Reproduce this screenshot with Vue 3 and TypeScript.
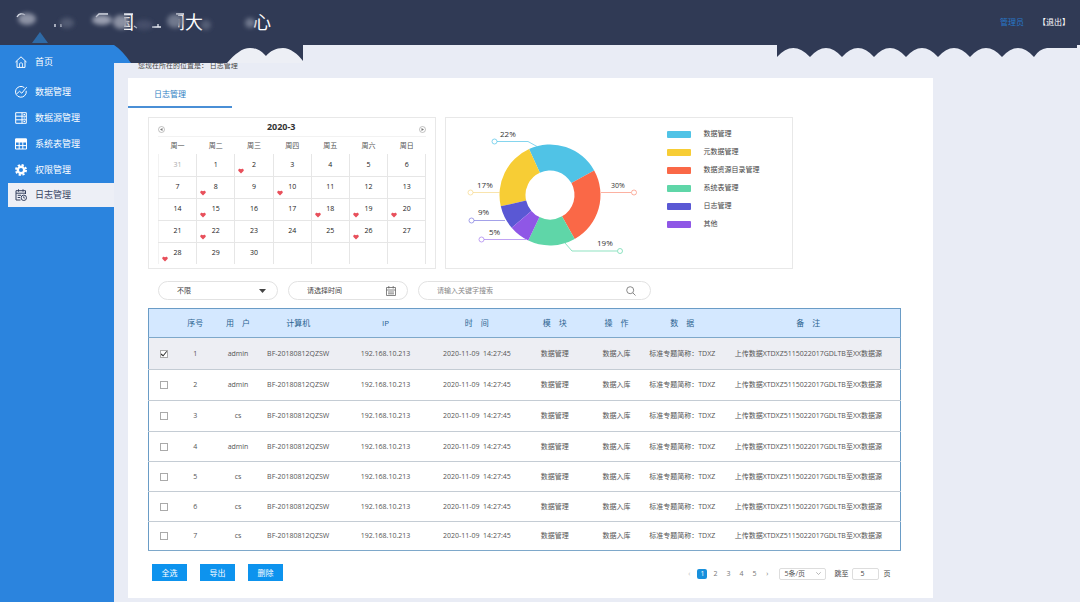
<script setup lang="ts">
import { computed, ref } from 'vue'

interface Day { n: number | null; muted?: boolean; mark?: boolean }
interface Slice { label: string; color: string; from: number; to: number }
interface Row { id: number; user: string; checked: boolean }

const nav = [
  { key: 'home', label: '首页' },
  { key: 'data', label: '数据管理' },
  { key: 'source', label: '数据源管理' },
  { key: 'table', label: '系统表管理' },
  { key: 'auth', label: '权限管理' },
  { key: 'log', label: '日志管理' },
]
const active = ref('log')

const weekdays = ['周一', '周二', '周三', '周四', '周五', '周六', '周日']
const marked = [2, 8, 10, 15, 18, 19, 20, 22, 26, 28]
const weeks = computed<Day[][]>(() =>
  Array.from({ length: 5 }, (_, w) =>
    Array.from({ length: 7 }, (_, d) => {
      const n = w * 7 + d
      if (n === 0) return { n: 31, muted: true }
      if (n > 30) return { n: null }
      return { n, mark: marked.includes(n) }
    }),
  ),
)

const slices: Slice[] = [
  { label: '数据管理', color: '#50c3e6', from: -24.5, to: 61 },
  { label: '元数据管理', color: '#f7cd35', from: 257, to: 335.5 },
  { label: '数据资源目录管理', color: '#fa6847', from: 61, to: 150.7 },
  { label: '系统表管理', color: '#5fd6a8', from: 150.7, to: 205.5 },
  { label: '日志管理', color: '#5a58d4', from: 229.4, to: 257 },
  { label: '其他', color: '#8f57e6', from: 205.5, to: 229.4 },
]
const point = (deg: number, r: number) => {
  const a = (deg * Math.PI) / 180
  return `${(104 + r * Math.sin(a)).toFixed(2)} ${(77 - r * Math.cos(a)).toFixed(2)}`
}
const arc = (s: Slice) =>
  `M${point(s.from, 50.5)}A50.5 50.5 0 0 1 ${point(s.to, 50.5)}L${point(s.to, 24.5)}A24.5 24.5 0 0 0 ${point(s.from, 24.5)}Z`

const heads = ['序号', '用　户', '计算机', 'IP', '时　间', '模　块', '操　作', '数　据', '备　注']
const rows = ref<Row[]>(
  ['admin', 'admin', 'cs', 'admin', 'cs', 'cs', 'cs'].map((user, i) => ({ id: i + 1, user, checked: i === 0 })),
)
const selectAll = () => rows.value.forEach((r) => (r.checked = true))
const page = ref(1)
const jump = ref('5')
</script>

<template>
  <div class="app">
    <header class="top">
      <h1 class="title"><span class="c1">国</span><span class="c2">间大</span><span>心</span></h1>
      <svg class="smudge" width="300" height="45" viewBox="0 0 300 45" aria-hidden="true">
        <defs><filter id="soft" x="-50%" y="-50%" width="200%" height="200%"><feGaussianBlur stdDeviation="2" /></filter></defs>
        <path d="M40 32L48 43H32Z" fill="#2e6aa6" />
        <g fill="#303a55">
          <rect x="113" y="11" width="11" height="23" /><rect x="166" y="11" width="12" height="23" />
        </g>
        <g stroke="#e8ecf4" stroke-width="1.3" fill="none">
          <path d="M17 17Q20 12 25 15M55 24V27M61 24V27M96 17L99 14H108M124 14H133M176 14H184M134 26L137 28M152 27H161M158 24V27" />
        </g>
        <g filter="url(#soft)">
          <ellipse cx="27" cy="19" rx="9" ry="6" fill="#8d93a5" />
          <ellipse cx="67" cy="23" rx="7" ry="5" fill="#515a72" />
          <ellipse cx="102" cy="20" rx="10" ry="5" fill="#9a9fb0" />
          <ellipse cx="121" cy="22" rx="8" ry="7" fill="#8a90a2" />
          <ellipse cx="144" cy="25" rx="9" ry="5" fill="#444e69" />
          <ellipse cx="175" cy="21" rx="8" ry="7" fill="#70788d" />
          <ellipse cx="206" cy="25" rx="5" ry="5" fill="#555e76" />
          <ellipse cx="250" cy="23" rx="5" ry="5" fill="#70788d" />
        </g>
      </svg>
      <div class="account"><a href="#" class="who">管理员</a><a href="#">【退出】</a></div>
      <svg class="edge-left" width="193" height="18" viewBox="0 0 193 18" aria-hidden="true">
        <path d="M0 0H193V18H0Z" fill="#303a55" />
        <path d="M0 0H4Q12 5 21 18H0Z" fill="#2b84de" />
        <path d="M117 18C125 9 132 3 140 3S152 7 156 11C160 6 166 3 173 3S188 9 193 16V18Z" fill="#edeff5" />
      </svg>
      <svg class="edge-right" width="300" height="14" viewBox="0 0 300 14" aria-hidden="true">
        <path d="M0 0H300V3H270Q262 4 257 12Q241-6 225 12Q209-6 193 12Q177-6 161 12Q145-6 129 12Q113-6 97 12Q81-6 65 12Q49-6 33 12Q16-6 0 12Z" fill="#303a55" />
      </svg>
    </header>

    <div class="body">
      <nav class="side">
        <a v-for="n in nav" :key="n.key" href="#" :class="{ on: active === n.key }" @click.prevent="active = n.key">
          <svg width="12" height="12" viewBox="0 0 12 12" fill="none" stroke="currentColor" aria-hidden="true">
            <template v-if="n.key === 'home'">
              <path d="M.5 6L6 .8L11.5 6M2 5V11.4H10V5" /><path d="M4.5 11V7.5Q6 5.8 7.5 7.5V11" stroke-width=".8" />
            </template>
            <template v-else-if="n.key === 'data'">
              <path d="M9.4 1.7A5.4 5.4 0 1 0 11.2 4.8" /><path d="M1.500 8L4.500 5.300L6.800 7.200L11.700 1.200" />
            </template>
            <template v-else-if="n.key === 'source'">
              <path d="M.7 .7H11.3V11.3H.7ZM.7 4.2H11.3M.7 7.8H11.3M7 .7V11.3M8.5 2.5H10M8.5 6H10M8.5 9.5H10" />
            </template>
            <template v-else-if="n.key === 'table'">
              <path d="M.5 1H11.5V11H.5ZM.5 7.6H11.5M4.2 4V11M7.8 4V11" /><path d="M.5 1H11.5V4H.5Z" fill="currentColor" />
            </template>
            <template v-else-if="n.key === 'auth'">
              <circle cx="6" cy="6" r="3.2" stroke-width="2.4" /><circle cx="6" cy="6" r="5" stroke-width="2" stroke-dasharray="2.2 1.73" />
            </template>
            <template v-else>
              <path d="M10.5 5V1.7H1V11H5.5M1 4.2H10.5M3.5 .3V2.7M8 .3V2.7M2.7 6.3H6M2.7 8.5H5" /><circle cx="8.8" cy="8.8" r="2.7" /><path d="M8.7 7.2V9H10" stroke-width=".8" />
            </template>
          </svg>
          <span>{{ n.label }}</span>
        </a>
      </nav>

      <main class="main">
        <p class="crumb">您现在所在的位置是： 日志管理</p>
        <section class="panel">
          <div class="tabs"><a href="#" class="tab">日志管理</a></div>
          <div class="content">
            <div class="cards">
              <div class="card cal">
                <div class="cal-head">
                  <button type="button" aria-label="上个月"><svg width="7" height="7" viewBox="0 0 7 7"><circle cx="3.5" cy="3.5" r="3" fill="none" stroke="#999" stroke-width=".6" /><path d="M4.5 2L2 3.5L4.5 5Z" fill="#777" /></svg></button>
                  <strong>2020-3</strong>
                  <button type="button" aria-label="下个月"><svg width="7" height="7" viewBox="0 0 7 7"><circle cx="3.5" cy="3.5" r="3" fill="none" stroke="#999" stroke-width=".6" /><path d="M2.5 2L5 3.5L2.5 5Z" fill="#777" /></svg></button>
                </div>
                <table class="days">
                  <thead><tr><th v-for="d in weekdays" :key="d">{{ d }}</th></tr></thead>
                  <tbody>
                    <tr v-for="(w, i) in weeks" :key="i">
                      <td v-for="(d, j) in w" :key="j" :class="{ muted: d.muted }">
                        {{ d.n }}
                        <svg v-if="d.mark" class="heart" width="6" height="6" viewBox="0 0 6 6" aria-hidden="true"><path d="M3 5.6L.5 3.1C-.5 1.5 1.5-.2 3 1.3C4.5-.2 6.5 1.5 5.5 3.1Z" fill="#e8505b" /></svg>
                      </td>
                    </tr>
                  </tbody>
                </table>
              </div>
              <div class="card chart">
                <svg width="215" height="150" viewBox="0 0 215 150" role="img" aria-label="占比">
                  <path v-for="s in slices" :key="s.label" :d="arc(s)" :fill="s.color" />
                  <g fill="none" stroke-width=".7">
                    <g stroke="#50c3e6"><path d="M51 23.500H82L91 28.500" /><circle cx="48.500" cy="23.500" r="2.500" /></g>
                    <g stroke="#f7d98a"><path d="M27 74.500H54" /><circle cx="24.500" cy="74.500" r="2.500" /></g>
                    <g stroke="#7b79e0"><path d="M28 102.500H59" /><circle cx="25.500" cy="102.500" r="2.500" /></g>
                    <g stroke="#a57bee"><path d="M38 121.500H80" /><circle cx="35.500" cy="121.500" r="2.500" /></g>
                    <g stroke="#fa8f78"><path d="M155 74.500H185" /><circle cx="188" cy="74.500" r="2.500" /></g>
                    <g stroke="#5fd6a8"><path d="M119 125L126 133H171" /><circle cx="174" cy="133" r="2.500" /></g>
                  </g>
                  <g class="pct"><text x="54" y="19">22%</text><text x="31" y="70">17%</text><text x="32" y="97">9%</text><text x="43" y="117">5%</text><text x="151" y="128">19%</text><text x="165" y="70" class="small">30%</text></g>
                </svg>
                <ul class="legend">
                  <li v-for="s in slices" :key="s.label">
                    <svg width="24" height="7" aria-hidden="true"><rect width="24" height="7" rx="1" :fill="s.color" /></svg>{{ s.label }}
                  </li>
                </ul>
              </div>
            </div>

            <form class="filters" @submit.prevent>
              <label class="pill">
                <select aria-label="类型"><option>不限</option></select>
                <svg width="7" height="4" viewBox="0 0 7 4"><path d="M0 0H7L3.500 4Z" fill="#444" /></svg>
              </label>
              <label class="pill">
                <input type="text" aria-label="时间" placeholder="请选择时间" class="dark" />
                <svg width="10" height="10" viewBox="0 0 10 10" fill="none" stroke="#666" stroke-width=".8"><path d="M.5 1.500H9.500V9.500H.5ZM.5 4H9.500M2.800 0V2.500M7.200 0V2.500M2 6H8M2 7.800H8" /></svg>
              </label>
              <label class="pill search">
                <input type="search" aria-label="关键字" placeholder="请输入关键字搜索" />
                <svg width="10" height="10" viewBox="0 0 10 10" fill="none" stroke="#888"><circle cx="4.200" cy="4.200" r="3.500" /><path d="M6.800 6.800L9.500 9.500" /></svg>
              </label>
            </form>

            <table class="grid">
              <colgroup><col v-for="i in 10" :key="i" :class="'w' + i" /></colgroup>
              <thead><tr><th></th><th v-for="h in heads" :key="h">{{ h }}</th></tr></thead>
              <tbody>
                <tr v-for="r in rows" :key="r.id" :class="{ picked: r.checked }">
                  <td><input v-model="r.checked" type="checkbox" :aria-label="'选择第' + r.id + '行'" /></td>
                  <td>{{ r.id }}</td>
                  <td>{{ r.user }}</td>
                  <td>BF-20180812QZSW</td>
                  <td>192.168.10.213</td>
                  <td>2020-11-09&nbsp; 14:27:45</td>
                  <td>数据管理</td>
                  <td>数据入库</td>
                  <td>标准专题简称：TDXZ</td>
                  <td>上传数据XTDXZ5115022017GDLTB至XX数据源</td>
                </tr>
              </tbody>
            </table>

            <div class="foot">
              <div class="actions">
                <button type="button" @click="selectAll">全选</button>
                <button type="button">导出</button>
                <button type="button">删除</button>
              </div>
              <div class="pager">
                <button type="button" aria-label="上一页" class="faint">‹</button>
                <button v-for="p in 5" :key="p" type="button" :class="{ now: p === page }" @click="page = p">{{ p }}</button>
                <button type="button" aria-label="下一页">›</button>
                <label class="size">
                  <select aria-label="每页条数"><option>5条/页</option></select>
                  <svg width="5" height="3" viewBox="0 0 5 3" fill="none" stroke="#999" stroke-width=".7"><path d="M.3 .3L2.500 2.500L4.700 .3" /></svg>
                </label>
                <label class="jump">跳至<input v-model="jump" type="text" />页</label>
              </div>
            </div>
          </div>
        </section>
      </main>
    </div>
  </div>
</template>

<style>
html, body { margin: 0; background: #e9edf5; }
</style>

<style scoped>
.app { min-height: 100vh; display: flex; flex-direction: column; font: 7px/10px "Open Sans", "Noto Sans CJK SC", sans-serif; color: #444; overflow: hidden; }
* { box-sizing: border-box; }
a { color: inherit; text-decoration: none; }
button, input, select { font: inherit; color: inherit; margin: 0; padding: 0; border: 0; background: none; appearance: none; outline: 0; }
table { border-collapse: collapse; table-layout: fixed; width: 100%; }
th, td { padding: 0; font-weight: 400; text-align: center; }

.top { position: relative; height: 45px; background: #303a55; color: #fff; display: flex; align-items: center; justify-content: space-between; padding: 0 10px 2px 116px; }
.title { margin: 0; font-size: 18px; line-height: 24px; font-weight: 400; display: flex; }
.c1 { margin-right: 33px; }
.c2 { margin-right: 50px; }
.smudge { position: absolute; left: 0; top: 0; }
.edge-left { position: absolute; left: 110px; top: 45px; z-index: 2; }
.edge-right { position: absolute; right: 3px; top: 45px; z-index: 2; }
.account { display: flex; gap: 14px; font-size: 8px; }
.who { color: #2878c8; }

.body { flex: 1; display: flex; align-items: stretch; }
.side { flex: none; width: 114px; background: #2b84de; color: #fff; font-size: 9px; }
.side a { display: flex; align-items: center; gap: 8px; height: 26px; margin-left: 8px; padding-left: 7px; }
.side a:first-child { height: 34px; }
.side a.on { background: #edeff6; color: #35415f; height: 24px; }
.main { flex: 1; min-width: 0; padding: 15px 0 4px 14px; background: #e9ecf5; }
.crumb { margin: 0; padding: 0 10px; height: 18px; line-height: 11px; }
.panel { background: #fff; width: 84.6%; min-height: 520px; }
.tabs { height: 29px; display: flex; }
.tab { width: 104px; padding-left: 26px; line-height: 32px; height: 30px; font-size: 8px; color: #2f7fc4; border-bottom: 2px solid #4a8fd6; }
.content { padding: 10px 32px 0 20px; }

.cards { display: grid; grid-template-columns: 288fr 347fr; gap: 9px; padding-right: 14.4%; }
.card { border: 1px solid #e8e8e8; height: 152px; min-width: 0; }
.cal { padding: 0 9px; }
.chart { display: flex; }
.cal-head { height: 19px; display: flex; align-items: center; justify-content: space-between; border-bottom: 1px solid #f2f2f2; }
.cal-head strong { font-size: 9px; color: #333; padding-right: 22px; }
.cal-head button { height: 7px; line-height: 0; margin-top: 4px; }
.days th { height: 17px; color: #555; }
.days td { position: relative; height: 22px; border: 1px solid #e6e6e6; color: #222; }
.days tr:first-child td { border-top: 0; }
.days tr:last-child td { border-bottom: 0; }
.days td:first-child { border-left-color: #f2f2f2; }
.days td.muted { color: #aaa; }
.heart { position: absolute; left: 3px; bottom: 2px; }
.pct { font-size: 8px; fill: #333; }
.small { font-size: 7px; }
.legend { list-style: none; margin: 7px 0 0 6px; padding: 0; }
.legend li { display: flex; align-items: center; gap: 12px; height: 18px; white-space: nowrap; color: #444; }

.filters { display: flex; gap: 10px; padding: 12px 0 8px 10px; }
.pill { width: 120px; height: 19px; border: 1px solid #e2e2e2; border-radius: 10px; display: flex; align-items: center; padding: 0 11px 0 18px; }
.pill input, .pill select { flex: 1; min-width: 0; height: 17px; }
.pill input::placeholder { color: #888; opacity: 1; }
.pill input.dark::placeholder { color: #444; }
.pill.search { width: 233px; padding-right: 14px; }

.grid { border: 1px solid #6a9cc6; }
.grid th { height: 29px; background: #d4e8ff; color: #2b638f; font-size: 8px; border-bottom: 1px solid #7ea8ca; }
.grid td { height: 30px; border-bottom: 1px solid #c4ccd4; color: #555; white-space: nowrap; }
.grid tr:nth-child(-n+3) td { height: 31px; }
.grid tr:first-child td { height: 32px; }
.grid tr:last-child td { height: 29px; border-bottom-color: #7ea8ca; }
.grid tr.picked td { background: #edeef3; }
.grid th:last-child, .grid td:last-child { padding-right: 10px; }
.w1 { width: 4%; } .w2 { width: 4.4%; } .w3 { width: 7%; } .w4 { width: 9%; } .w5 { width: 14.2%; }
.w6 { width: 10.1%; } .w7 { width: 10.6%; } .w8 { width: 5.8%; } .w9 { width: 11.7%; } .w10 { width: 23.2%; }
.grid input { display: block; position: relative; width: 8px; height: 8px; margin: 0 auto; border: 1px solid #aaa; background: #fff; }
.grid input:checked::after { content: ""; position: absolute; inset: 0; background: #333; clip-path: polygon(0 45%, 40% 75%, 100% 0, 100% 25%, 40% 100%, 0 70%); }

.foot { display: flex; align-items: center; justify-content: space-between; padding: 13px 11px 0 4px; }
.actions { display: flex; gap: 13px; }
.actions button { width: 35px; height: 17px; background: #0d93ee; color: #fff; font-size: 8px; }
.pager { display: flex; align-items: center; color: #777; padding-top: 2px; }
.pager button { width: 10px; height: 10px; line-height: 10px; margin-right: 3px; }
.pager button.faint { color: #bbb; }
.pager button.now { background: #1890dc; color: #fff; border-radius: 2px; }
.size { display: flex; align-items: center; width: 47px; height: 12px; border: 1px solid #ddd; border-radius: 2px; margin: 0 8px 0 4px; padding: 0 4px; color: #555; }
.size select { flex: 1; min-width: 0; height: 10px; line-height: 10px; }
.jump { display: flex; align-items: center; gap: 4px; color: #444; }
.jump input { width: 27px; height: 12px; border: 1px solid #ddd; border-radius: 2px; padding-left: 7px; }
</style>
